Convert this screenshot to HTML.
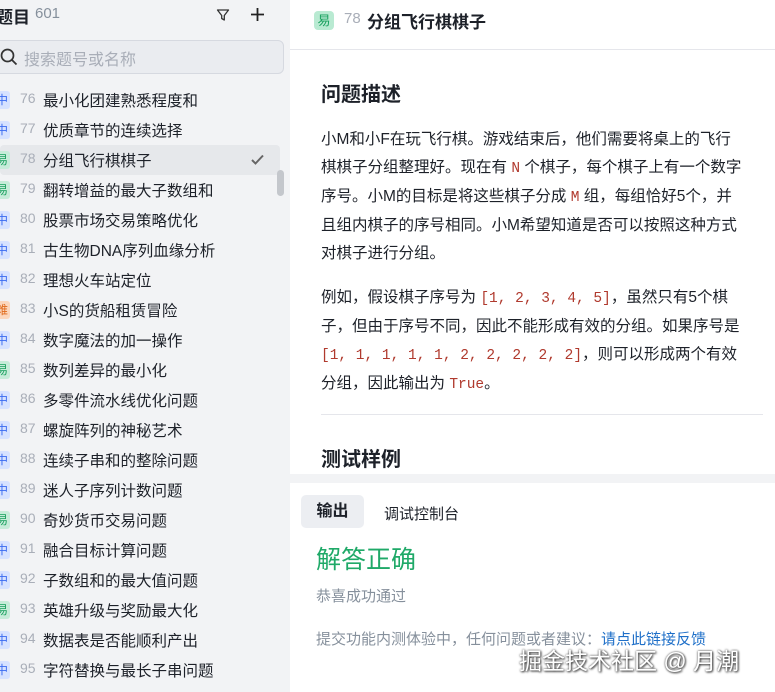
<!DOCTYPE html>
<html><head><meta charset="utf-8"><style>
*{margin:0;padding:0;box-sizing:border-box}
body{width:775px;height:692px;overflow:hidden;position:relative;background:#fff;font-family:"Liberation Sans","Noto Sans CJK SC",sans-serif;color:#1d2129}
#side{position:absolute;left:0;top:0;width:290px;height:692px;background:#f2f3f5}
.ttl{position:absolute;left:-4px;top:3px;font-size:17px;font-weight:bold}
.cnt{position:absolute;left:35px;top:5px;font-size:15px;color:#86909c}
.search{position:absolute;left:-10px;top:40px;width:294px;height:34px;border:1px solid #d6d9e0;border-radius:6px;background:#eaecf0}
.search span{position:absolute;left:33px;top:5px;font-size:16px;color:#a9aeb8}
.row{position:absolute;left:0;width:280px;height:30px}
.row.sel{background:#e6e8eb;border-radius:4px}
.b{position:absolute;left:-6px;top:6px;width:16px;height:18px;border-radius:3px;font-size:12px;line-height:18px;text-align:center;overflow:hidden}
.m{background:#d6e2ff;color:#3a6bf0}.e{background:#c6ecd9;color:#17a05d}.h{background:#fbd7bd;color:#e0691a}
.n{position:absolute;left:20px;top:5px;font-size:14px;color:#a9aeb8}
.t{position:absolute;left:43px;top:4px;font-size:15.5px;color:#1d2129}
#hdr{position:absolute;left:290px;top:0;width:485px;height:50px;border-bottom:1px solid #e5e6eb}
.content{position:absolute;left:321px;font-size:15.5px;line-height:28px;color:#1d2129}
code{font-family:"Liberation Mono",monospace;color:#b03a2e;font-size:14.5px}
</style></head><body>
<div id="side">
<div class="ttl">题目</div><div class="cnt">601</div>
<svg style="position:absolute;left:216px;top:8px" width="14" height="14" viewBox="0 0 14 14"><path d="M1.5 2h11L8.3 7.5V12L5.7 10.5V7.5z" fill="none" stroke="#333" stroke-width="1.3" stroke-linejoin="round"/></svg>
<svg style="position:absolute;left:250px;top:7px" width="15" height="15" viewBox="0 0 15 15"><path d="M7.5 1v13M1 7.5h13" stroke="#222" stroke-width="1.8"/></svg>
<div class="search"><svg style="position:absolute;left:9px;top:7px" width="18" height="18" viewBox="0 0 18 18"><circle cx="7.5" cy="7.5" r="6" fill="none" stroke="#333" stroke-width="1.7"/><path d="M12 12l4.5 4.5" stroke="#333" stroke-width="1.8"/></svg><span>搜索题号或名称</span></div>
<div class="row" style="top:85px"><div class="b m">中</div><div class="n">76</div><div class="t">最小化团建熟悉程度和</div></div>
<div class="row" style="top:115px"><div class="b m">中</div><div class="n">77</div><div class="t">优质章节的连续选择</div></div>
<div class="row sel" style="top:145px"><div class="b e">易</div><div class="n">78</div><div class="t">分组飞行棋棋子</div><svg style="position:absolute;left:251px;top:9px" width="13" height="11" viewBox="0 0 13 11"><path d="M1 6l3.5 3.5L12 1.5" fill="none" stroke="#666" stroke-width="2"/></svg></div>
<div class="row" style="top:175px"><div class="b e">易</div><div class="n">79</div><div class="t">翻转增益的最大子数组和</div></div>
<div class="row" style="top:205px"><div class="b m">中</div><div class="n">80</div><div class="t">股票市场交易策略优化</div></div>
<div class="row" style="top:235px"><div class="b m">中</div><div class="n">81</div><div class="t">古生物DNA序列血缘分析</div></div>
<div class="row" style="top:265px"><div class="b m">中</div><div class="n">82</div><div class="t">理想火车站定位</div></div>
<div class="row" style="top:295px"><div class="b h">难</div><div class="n">83</div><div class="t">小S的货船租赁冒险</div></div>
<div class="row" style="top:325px"><div class="b m">中</div><div class="n">84</div><div class="t">数字魔法的加一操作</div></div>
<div class="row" style="top:355px"><div class="b e">易</div><div class="n">85</div><div class="t">数列差异的最小化</div></div>
<div class="row" style="top:385px"><div class="b m">中</div><div class="n">86</div><div class="t">多零件流水线优化问题</div></div>
<div class="row" style="top:415px"><div class="b m">中</div><div class="n">87</div><div class="t">螺旋阵列的神秘艺术</div></div>
<div class="row" style="top:445px"><div class="b m">中</div><div class="n">88</div><div class="t">连续子串和的整除问题</div></div>
<div class="row" style="top:475px"><div class="b m">中</div><div class="n">89</div><div class="t">迷人子序列计数问题</div></div>
<div class="row" style="top:505px"><div class="b e">易</div><div class="n">90</div><div class="t">奇妙货币交易问题</div></div>
<div class="row" style="top:535px"><div class="b m">中</div><div class="n">91</div><div class="t">融合目标计算问题</div></div>
<div class="row" style="top:565px"><div class="b m">中</div><div class="n">92</div><div class="t">子数组和的最大值问题</div></div>
<div class="row" style="top:595px"><div class="b e">易</div><div class="n">93</div><div class="t">英雄升级与奖励最大化</div></div>
<div class="row" style="top:625px"><div class="b m">中</div><div class="n">94</div><div class="t">数据表是否能顺利产出</div></div>
<div class="row" style="top:655px"><div class="b m">中</div><div class="n">95</div><div class="t">字符替换与最长子串问题</div></div>
<div style="position:absolute;left:277px;top:170px;width:7px;height:26px;border-radius:4px;background:#c4c7cc"></div>
</div>
<div id="hdr">
<div style="position:absolute;left:24px;top:11px;width:20px;height:19px;border-radius:4px;background:#b9ead2;color:#17a05d;font-size:13px;line-height:19px;text-align:center">易</div>
<div style="position:absolute;left:54px;top:10px;font-size:15px;color:#a9aeb8">78</div>
<div style="position:absolute;left:77px;top:8px;font-size:17px;font-weight:bold;color:#1d2129">分组飞行棋棋子</div>
</div>
<div class="content" style="top:80px;font-size:20px;font-weight:bold;line-height:30px">问题描述</div>
<div class="content" style="top:126px">小M和小F在玩飞行棋。游戏结束后，他们需要将桌上的飞行<br>棋棋子分组整理好。现在有 <code>N</code> 个棋子，每个棋子上有一个数字<br>序号。小M的目标是将这些棋子分成 <code>M</code> 组，每组恰好5个，并<br>且组内棋子的序号相同。小M希望知道是否可以按照这种方式<br>对棋子进行分组。</div>
<div class="content" style="top:284px">例如，假设棋子序号为 <code>[1, 2, 3, 4, 5]</code>，虽然只有5个棋<br>子，但由于序号不同，因此不能形成有效的分组。如果序号是<br><code>[1, 1, 1, 1, 1, 2, 2, 2, 2, 2]</code>，则可以形成两个有效<br>分组，因此输出为 <code>True</code>。</div>
<div style="position:absolute;left:321px;top:414px;width:442px;height:1px;background:#e5e6eb"></div>
<div class="content" style="top:445px;font-size:20px;font-weight:bold;line-height:30px">测试样例</div>
<div style="position:absolute;left:290px;top:474px;width:485px;height:9px;background:#f2f3f5"></div>
<div style="position:absolute;left:301px;top:495px;width:63px;height:33px;border-radius:5px;background:#eceef2;font-size:16px;font-weight:bold;text-align:center;line-height:33px">输出</div>
<div style="position:absolute;left:384px;top:503px;font-size:15px;color:#1d2129">调试控制台</div>
<div style="position:absolute;left:316px;top:540px;font-size:25px;color:#1fa968">解答正确</div>
<div style="position:absolute;left:316px;top:585px;font-size:15px;color:#86909c">恭喜成功通过</div>
<div style="position:absolute;left:316px;top:628px;font-size:15px;color:#86909c">提交功能内测体验中，任何问题或者建议：<span style="color:#1e6fc8">请点此链接反馈</span></div>
<div style="position:absolute;left:519px;top:642px;font-size:23px;color:#fff;text-shadow:0 0 2px #444,1px 1px 2px #333">掘金技术社区 @ 月潮</div>
</body></html>
